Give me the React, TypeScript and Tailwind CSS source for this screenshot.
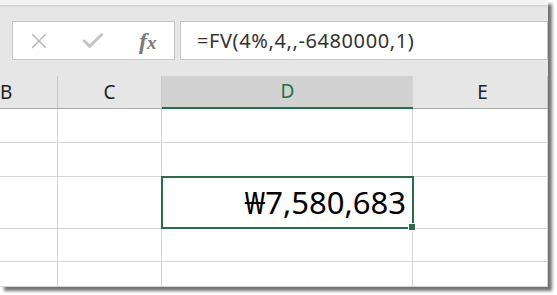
import { X, Check } from "lucide-react";

const cols = [
  { label: "B", w: "w-[58px]", align: "justify-start pl-0" },
  { label: "C", w: "w-[104px]", align: "justify-center" },
  { label: "D", w: "w-[251px]", align: "justify-center", active: true },
  { label: "E", w: "w-[135px]", align: "justify-center pl-[5px]" },
];

const rowHeights = ["h-[34px]", "h-[34px]", "h-[52px]", "h-[33px]", "h-[25px]"];

export default function App() {
  return (
    <div className="w-[557px] h-[295px] bg-white" style={{ fontFamily: "'Noto Sans', 'Open Sans', sans-serif" }}>
      <div className="relative w-[548px] h-[287px] flex flex-col bg-white shadow-[4px_4px_3px_rgba(0,0,0,0.55)] overflow-hidden">
        {/* top strip */}
        <div className="h-[5px] bg-[#f3f2f1] shadow-[0_1px_2px_rgba(0,0,0,0.12)] z-10" />

        {/* formula bar */}
        <div className="h-[71px] bg-[#e6e6e6] flex items-start pt-[16px] pl-[12px] gap-[5px]">
          <div className="w-[163px] h-[39px] bg-white border border-[#c6c6c6] flex items-center">
            <X size={26} strokeWidth={1.3} className="ml-[13px] text-[#b8b8b8]" />
            <Check size={26} strokeWidth={2.8} className="ml-[28px] text-[#c4c4c4]" />
            <span
              className="ml-[33px] text-[24px] italic font-bold text-[#7a7a7a] leading-none"
              style={{ fontFamily: "'Liberation Serif', 'DejaVu Serif', serif" }}
            >
              f<span className="text-[19px]">x</span>
            </span>
          </div>
          <div className="w-[368px] h-[39px] bg-white border border-[#c6c6c6] flex items-center pl-[16px] text-[20px] tracking-[0.6px] text-[#333]">
            =FV(4%,4,,-6480000,1)
          </div>
        </div>

        {/* column headers */}
        <div className="flex h-[33px] bg-[#e6e6e6] border-b border-[#ababab]">
          {cols.map((c) => (
            <div
              key={c.label}
              className={`${c.w} flex items-center ${c.align} text-[19px] ${
                c.active
                  ? "bg-[#d2d2d2] text-[#217346] border-b-2 border-[#217346] -mb-px"
                  : "text-[#222] border-r border-[#c8c8c8]"
              }`}
            >
              {c.label}
            </div>
          ))}
        </div>

        {/* grid */}
        <div className="relative flex-1">
          {rowHeights.map((h, i) => (
            <div key={i} className={`flex ${h} border-b border-[#d4d4d4]`}>
              {cols.map((c) => (
                <div key={c.label} className={`${c.w} border-r border-[#d4d4d4]`} />
              ))}
            </div>
          ))}

          {/* selected cell */}
          <div className="absolute left-[161px] top-[67px] w-[253px] h-[53px] border-2 border-[#2e6b4a] flex items-center justify-end pr-[6px]">
            <span className="text-[31px] text-black leading-none">₩7,580,683</span>
            <div className="absolute -right-[4px] -bottom-[4px] w-[6px] h-[6px] bg-[#2e6b4a] border border-white box-content" />
          </div>
        </div>
      </div>
    </div>
  );
}
